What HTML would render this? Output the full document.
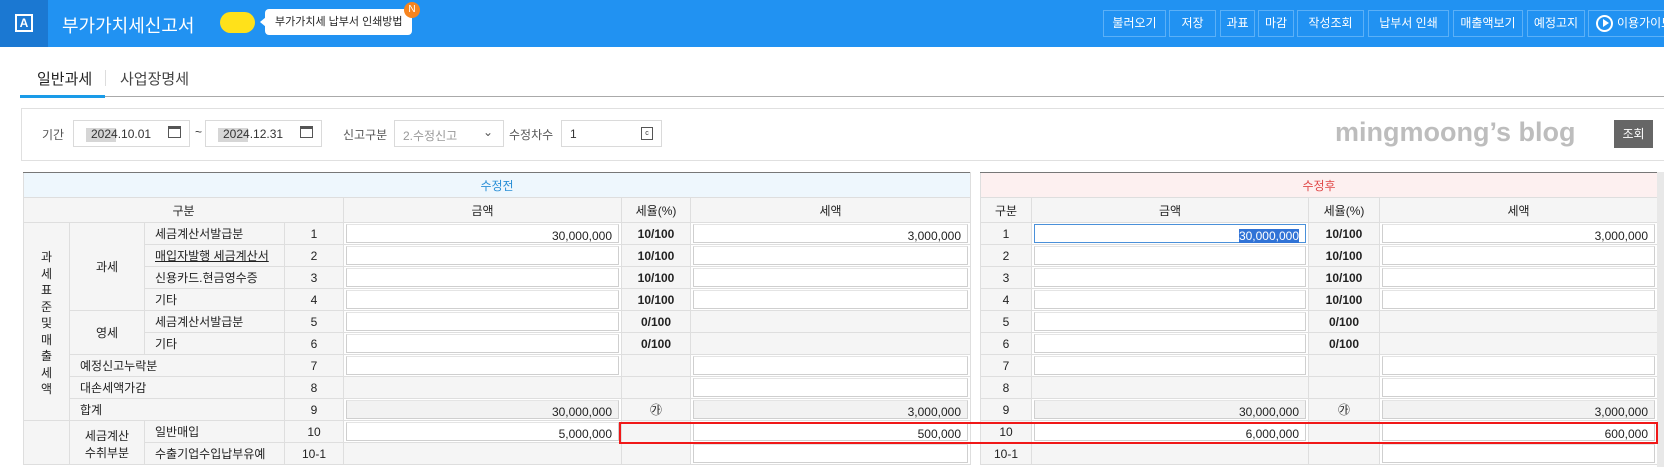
<!DOCTYPE html>
<html><head><meta charset="utf-8"><style>
*{box-sizing:border-box;margin:0;padding:0}
body{width:1664px;height:467px;overflow:hidden;background:#fff;font-family:"Liberation Sans","Noto Sans CJK KR",sans-serif;font-size:12px;color:#333;position:relative}
.abs{position:absolute}
.hdr{left:0;top:0;width:1664px;height:47px;background:#2192f2}
.logo{left:0;top:0;width:48px;height:47px;background:#1b78d2}
.logo div{position:absolute;left:15px;top:14px;width:18px;height:18px;border:2px solid #fff;color:#fff;font-size:12px;font-weight:bold;text-align:center;line-height:14px}
.btn{top:10px;height:27px;border:1px solid #5bb0f7;color:#fff;font-size:12px;line-height:25px;text-align:center}
table{border-collapse:collapse;table-layout:fixed;position:absolute}
td{border:1px solid #dedede;height:21px;background:#f5f5f5;text-align:center;font-size:12px;color:#222;padding:0;overflow:hidden;white-space:nowrap}
tr{height:22px}
td.l{text-align:left;padding-left:10px}
td.i{background:#fff;padding:0}
td.i div{height:19px;margin:1px 2px;border:1px solid #cfcfcf;border-top-color:#e4e4e4;background:#fff;text-align:right;padding:4px 6px 0 0;line-height:14px}
td.g div{background:#f2f2f2}
td.b{font-weight:bold}
.inp{height:27px;border:1px solid #dadada;background:#fff}
</style></head><body>
<div class="abs hdr"></div>
<div class="abs logo"><div>A</div></div>
<div class="abs" style="left:62px;top:12px;color:#fff;font-size:18px">부가가치세신고서</div>
<div class="abs" style="left:220px;top:12px;width:35px;height:21px;border-radius:11px;background:#ffe11a"></div>
<div class="abs" style="left:260px;top:17px;width:0;height:0;border-top:5px solid transparent;border-bottom:5px solid transparent;border-right:6px solid #fff"></div>
<div class="abs" style="left:265px;top:9px;width:147px;height:26px;background:#fff;border-radius:4px;font-size:11px;line-height:26px;padding-left:10px;color:#222">부가가치세 납부서 인쇄방법</div>
<div class="abs" style="left:404px;top:2px;width:16px;height:16px;border-radius:8px;background:#f7841f;color:#fff;font-size:10px;text-align:center;line-height:16px">N</div>

<div class="abs btn" style="left:1103px;width:63px">불러오기</div>
<div class="abs btn" style="left:1169px;width:47px">저장</div>
<div class="abs btn" style="left:1220px;width:35px">과표</div>
<div class="abs btn" style="left:1258px;width:36px">마감</div>
<div class="abs btn" style="left:1297px;width:67px">작성조회</div>
<div class="abs btn" style="left:1368px;width:81px">납부서 인쇄</div>
<div class="abs btn" style="left:1453px;width:70px">매출액보기</div>
<div class="abs btn" style="left:1527px;width:58px">예정고지</div>
<div class="abs btn" style="left:1588px;width:90px;text-align:left;padding-left:28px">이용가이드</div>
<div class="abs" style="left:1596px;top:15px;width:17px;height:17px;border:2px solid #fff;border-radius:50%"></div>
<div class="abs" style="left:1603px;top:19px;width:0;height:0;border-top:4px solid transparent;border-bottom:4px solid transparent;border-left:6px solid #fff"></div>

<div class="abs" style="left:37px;top:68px;font-size:15px;color:#222">일반과세</div>
<div class="abs" style="left:105px;top:70px;width:1px;height:16px;background:#ddd"></div>
<div class="abs" style="left:120px;top:68px;font-size:15px;color:#444">사업장명세</div>
<div class="abs" style="left:20px;top:96px;width:1644px;height:1px;background:#aaa"></div>
<div class="abs" style="left:20px;top:95px;width:85px;height:3px;background:#1a9be8"></div>

<div class="abs" style="left:21px;top:108px;width:1643px;height:53px;border:1px solid #e0e0e0;border-right:none"></div>
<div class="abs" style="left:42px;top:126px;font-size:12px;color:#555">기간</div>
<div class="abs inp" style="left:73px;top:120px;width:117px"></div>
<div class="abs" style="left:86px;top:128px;background:#d6d6d6;width:30px;height:14px"></div>
<div class="abs" style="left:91px;top:127px;color:#333">2024.10.01</div>
<div class="abs" style="left:168px;top:126px;width:13px;height:12px;border:1.5px solid #555;border-top-width:3px"></div>
<div class="abs" style="left:195px;top:125px;color:#333">~</div>
<div class="abs inp" style="left:205px;top:120px;width:117px"></div>
<div class="abs" style="left:218px;top:128px;background:#d6d6d6;width:30px;height:14px"></div>
<div class="abs" style="left:223px;top:127px;color:#333">2024.12.31</div>
<div class="abs" style="left:300px;top:126px;width:13px;height:12px;border:1.5px solid #555;border-top-width:3px"></div>
<div class="abs" style="left:343px;top:126px;color:#555">신고구분</div>
<div class="abs inp" style="left:394px;top:120px;width:110px;color:#999;padding:6px 0 0 8px">2.수정신고<span style="position:absolute;right:10px;top:4px;color:#555">⌄</span></div>
<div class="abs" style="left:509px;top:126px;color:#555">수정차수</div>
<div class="abs inp" style="left:561px;top:120px;width:101px;padding:6px 0 0 8px">1</div>
<div class="abs" style="left:641px;top:127px;width:12px;height:13px;border:1px solid #555;font-size:7px;text-align:center;line-height:11px">c</div>
<div class="abs" style="left:1335px;top:117px;font-size:27px;font-weight:bold;color:#bdbdbd">mingmoong’s blog</div>
<div class="abs" style="left:1614px;top:120px;width:39px;height:28px;background:#666;color:#fff;text-align:center;line-height:28px">조회</div>

<table style="left:23px;top:172px;width:947px">
<colgroup><col style="width:46px"><col style="width:75px"><col style="width:140px"><col style="width:59px"><col style="width:278px"><col style="width:69px"><col style="width:280px"></colgroup>
<tr style="height:25px"><td colspan="7" style="height:24px;background:#eef7fd;color:#2a8fd6;border-top:1px solid #777">수정전</td></tr>
<tr style="height:25px"><td colspan="4" style="height:24px">구분</td><td>금액</td><td>세율(%)</td><td>세액</td></tr>
<tr><td rowspan="9" style="white-space:normal;line-height:16.5px;padding-top:4px">과<br>세<br>표<br>준<br>및<br>매<br>출<br>세<br>액</td><td rowspan="4">과세</td><td class="l">세금계산서발급분</td><td>1</td><td class="i"><div>30,000,000</div></td><td class="b">10/100</td><td class="i"><div>3,000,000</div></td></tr>
<tr><td class="l" style="text-decoration:underline">매입자발행 세금계산서</td><td>2</td><td class="i"><div></div></td><td class="b">10/100</td><td class="i"><div></div></td></tr>
<tr><td class="l">신용카드.현금영수증</td><td>3</td><td class="i"><div></div></td><td class="b">10/100</td><td class="i"><div></div></td></tr>
<tr><td class="l">기타</td><td>4</td><td class="i"><div></div></td><td class="b">10/100</td><td class="i"><div></div></td></tr>
<tr><td rowspan="2">영세</td><td class="l">세금계산서발급분</td><td>5</td><td class="i"><div></div></td><td class="b">0/100</td><td></td></tr>
<tr><td class="l">기타</td><td>6</td><td class="i"><div></div></td><td class="b">0/100</td><td></td></tr>
<tr><td colspan="2" class="l">예정신고누락분</td><td>7</td><td class="i"><div></div></td><td></td><td class="i"><div></div></td></tr>
<tr><td colspan="2" class="l">대손세액가감</td><td>8</td><td></td><td></td><td class="i"><div></div></td></tr>
<tr><td colspan="2" class="l">합계</td><td>9</td><td class="i g"><div>30,000,000</div></td><td>㉮</td><td class="i g"><div>3,000,000</div></td></tr>
<tr><td rowspan="2"></td><td rowspan="2" style="white-space:normal;line-height:17px;padding-top:4px">세금계산<br>수취부분</td><td class="l">일반매입</td><td>10</td><td class="i"><div>5,000,000</div></td><td></td><td class="i"><div>500,000</div></td></tr>
<tr><td class="l">수출기업수입납부유예</td><td>10-1</td><td></td><td></td><td class="i"><div></div></td></tr>
</table>

<table style="left:980px;top:172px;width:677px">
<colgroup><col style="width:51px"><col style="width:277px"><col style="width:71px"><col style="width:278px"></colgroup>
<tr style="height:25px"><td colspan="4" style="height:24px;background:#fdf0f0;color:#e04848;border-top:1px solid #777">수정후</td></tr>
<tr style="height:25px"><td style="height:24px">구분</td><td>금액</td><td>세율(%)</td><td>세액</td></tr>
<tr><td>1</td><td class="i"><div style="border-color:#4a90d9"><span style="background:#3173d6;color:#fff">30,000,000</span></div></td><td class="b">10/100</td><td class="i"><div>3,000,000</div></td></tr>
<tr><td>2</td><td class="i"><div></div></td><td class="b">10/100</td><td class="i"><div></div></td></tr>
<tr><td>3</td><td class="i"><div></div></td><td class="b">10/100</td><td class="i"><div></div></td></tr>
<tr><td>4</td><td class="i"><div></div></td><td class="b">10/100</td><td class="i"><div></div></td></tr>
<tr><td>5</td><td class="i"><div></div></td><td class="b">0/100</td><td></td></tr>
<tr><td>6</td><td class="i"><div></div></td><td class="b">0/100</td><td></td></tr>
<tr><td>7</td><td class="i"><div></div></td><td></td><td class="i"><div></div></td></tr>
<tr><td>8</td><td></td><td></td><td class="i"><div></div></td></tr>
<tr><td>9</td><td class="i g"><div>30,000,000</div></td><td>㉮</td><td class="i g"><div>3,000,000</div></td></tr>
<tr><td>10</td><td class="i"><div>6,000,000</div></td><td></td><td class="i"><div>600,000</div></td></tr>
<tr><td>10-1</td><td></td><td></td><td class="i"><div></div></td></tr>
</table>
<div class="abs" style="left:1657px;top:172px;width:7px;height:295px;background:#e8e8e8"></div>
<div class="abs" style="left:619px;top:422px;width:1039px;height:22px;border:2px solid #f01818"></div>
</body></html>
